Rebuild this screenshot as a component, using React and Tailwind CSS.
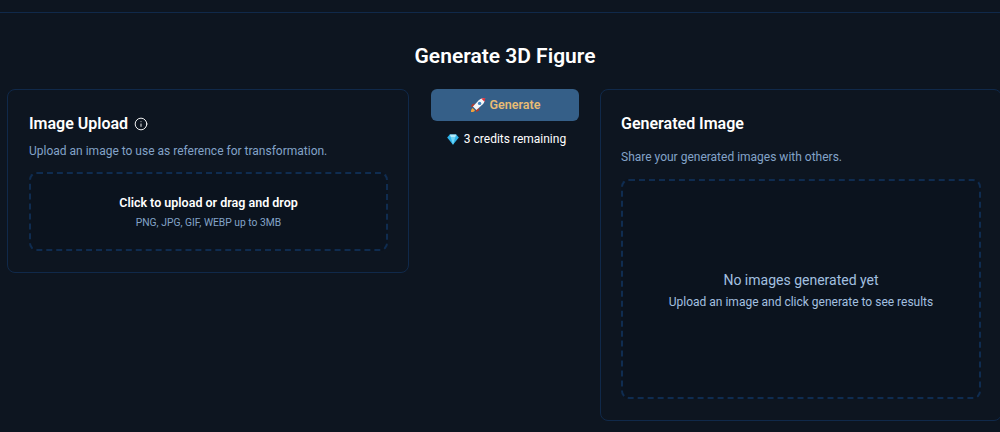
import { Info } from "lucide-react";

function Rocket() {
  return (
    <svg width="16" height="16" viewBox="0 0 16 16" className="shrink-0">
      <path d="M4.800 6.600 2.200 7.200.9 10l3.100-.4z" fill="#b8392a" />
      <path d="M9.400 11.200 8.800 13.800 6 15.100l.4-3.100z" fill="#b8392a" />
      <path d="M1 15c-.2-1.700.5-3.200 1.600-4l2.400 2.400C4.200 14.500 2.700 15.200 1 15z" fill="#f2a33a" />
      <path d="M2.900 9.600 8.800 3.200C10.400 1.600 13 .8 15.100.9c.1 2.100-.7 4.700-2.300 6.300l-6.400 5.900z" fill="#f4f6f8" />
      <path d="M11.200 1.500c1.200-.5 2.700-.7 3.900-.6.100 1.200-.1 2.700-.6 3.900z" fill="#d8343f" />
      <circle cx="9.600" cy="6.400" r="1.700" fill="#3f86c4" />
    </svg>
  );
}

function Gem() {
  return (
    <svg width="12" height="12" viewBox="0 0 13 13" className="shrink-0">
      <path d="M3 1.500h7L12.800 5 6.500 12.600.2 5z" fill="#2fb4ea" />
      <path d="M3 1.500h7L8.800 5H4.200z" fill="#b4ecfc" />
      <path d="M4.200 5h4.600L6.500 12.600z" fill="#6fd6f7" />
    </svg>
  );
}

export default function App() {
  return (
    <div
      className="h-[432px] w-[1000px] overflow-hidden bg-[#0d1520] text-white"
      style={{ fontFamily: "Roboto, sans-serif" }}
    >
      <div className="mt-3 h-px bg-[#10294a]" />
      <h1 className="mt-[30px] pl-[10px] text-center text-[21px] leading-[26px] font-semibold text-white">
        Generate 3D Figure
      </h1>
      <div className="mt-[20px] flex w-[1010px] items-start pl-[7px]">
        <div className="h-[184px] w-[402px] shrink-0 rounded-lg border border-[#10294a] px-[21px] pt-[22px]">
          <div className="flex items-center gap-[6px]">
            <h2 className="text-base leading-6 font-semibold text-white">Image Upload</h2>
            <Info size={14} strokeWidth={1.6} className="text-white" />
          </div>
          <p className="mt-[6px] text-xs leading-[18px] text-[#83a3c8]">
            Upload an image to use as reference for transformation.
          </p>
          <div className="mt-[12px] flex h-[79px] w-[359px] flex-col items-center justify-center rounded-lg border-2 border-dashed border-[#0f2c50] bg-[#0b131e] pt-[3px]">
            <p className="text-[12.5px] leading-4 font-semibold text-white">Click to upload or drag and drop</p>
            <p className="mt-[4px] text-[10.3px] leading-4 text-[#83a3c8]">PNG, JPG, GIF, WEBP up to 3MB</p>
          </div>
        </div>
        <div className="ml-[22px] flex w-[148px] shrink-0 flex-col items-center">
          <button className="flex h-8 w-full items-center justify-center gap-[4px] rounded-md bg-[#355f88] text-[12.5px] font-semibold text-[#e8bc74]">
            <Rocket />
            Generate
          </button>
          <div className="mt-[9px] ml-[3px] flex items-center gap-[5px] text-xs leading-[18px] text-white">
            <Gem />
            <span>3 credits remaining</span>
          </div>
        </div>
        <div className="ml-[21px] h-[332px] w-[402px] shrink-0 rounded-lg border border-[#10294a] px-[20px] pt-[22px]">
          <h2 className="text-base leading-6 font-semibold text-white">Generated Image</h2>
          <p className="mt-[12px] text-xs leading-[18px] text-[#83a3c8]">Share your generated images with others.</p>
          <div className="mt-[13px] flex h-[220px] w-[360px] flex-col items-center justify-center rounded-lg border-2 border-dashed border-[#0f2c50] bg-[#0b131e] pt-[2px]">
            <p className="text-[14px] leading-5 text-[#a3c0e0]">No images generated yet</p>
            <p className="mt-[3px] text-xs leading-[18px] text-[#a3c0e0]">Upload an image and click generate to see results</p>
          </div>
        </div>
      </div>
    </div>
  );
}
